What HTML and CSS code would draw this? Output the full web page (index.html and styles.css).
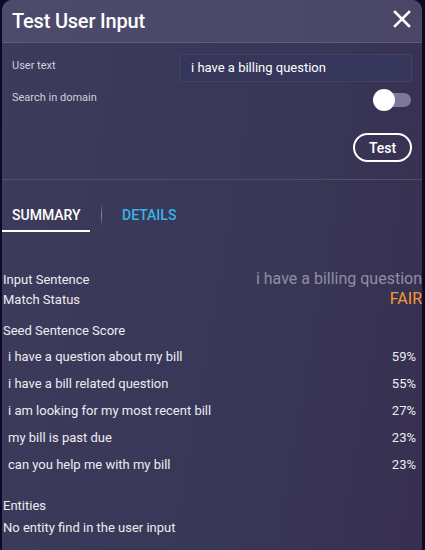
FILE: index.html
```html
<!DOCTYPE html>
<html>
<head>
<meta charset="utf-8">
<link rel="stylesheet" href="styles.css">
</head>
<body>
<div class="panel">
  <div class="header">
    <h1 class="title">Test User Input</h1>
    <svg class="close" width="18" height="18" viewBox="0 0 18 18"><path d="M2 2 L16 16 M16 2 L2 16" stroke="#fff" stroke-width="2.6" stroke-linecap="square"/></svg>
  </div>
  <div class="form">
    <div class="row">
      <span class="label">User text</span>
      <div class="input">i have a billing question</div>
    </div>
    <div class="row toggle-row">
      <span class="label">Search in domain</span>
      <div class="toggle"><span class="track"></span><span class="thumb"></span></div>
    </div>
    <div class="actions"><button class="btn">Test</button></div>
  </div>
  <div class="tabs">
    <div class="tab active">SUMMARY</div>
    <div class="sep"></div>
    <div class="tab link">DETAILS</div>
  </div>
  <div class="summary">
    <div class="kv"><span>Input Sentence</span><span class="val gray">i have a billing question</span></div>
    <div class="kv"><span>Match Status</span><span class="val orange">FAIR</span></div>
    <div class="section">Seed Sentence Score</div>
    <div class="scores">
      <div class="score"><span>i have a question about my bill</span><span>59%</span></div>
      <div class="score"><span>i have a bill related question</span><span>55%</span></div>
      <div class="score"><span>i am looking for my most recent bill</span><span>27%</span></div>
      <div class="score"><span>my bill is past due</span><span>23%</span></div>
      <div class="score"><span>can you help me with my bill</span><span>23%</span></div>
    </div>
    <div class="entities">Entities</div>
    <div class="noent">No entity find in the user input</div>
  </div>
</div>
</body>
</html>
```
FILE: styles.css
```css
html, body { margin: 0; padding: 0; }
body {
  background: #0c0a26;
  font-family: Roboto, "Noto Sans", sans-serif;
  color: #ececf2;
  width: 425px;
  height: 550px;
  overflow: hidden;
}
.panel {
  margin-left: 2px;
  width: 420px;
  height: 550px;
  border-radius: 10px 10px 0 0;
  background: linear-gradient(100deg, #3c3b5b 0%, #393757 60%, #372f50 100%);
  overflow: hidden;
}
.header {
  height: 43px;
  border-bottom: 1px solid #5e5c7a;
  background: linear-gradient(90deg, #4c4b6b, #4a4766);
  display: flex;
  align-items: center;
  justify-content: space-between;
  padding: 0 11px 0 10px;
  box-sizing: border-box;
}
.title {
  margin: 0;
  font-size: 20px;
  font-weight: 500;
  color: #fff;
  letter-spacing: -0.2px;
  padding-bottom: 1px;
}
.close { margin-top: -4px; }
.form {
  padding: 11px 10px 17px 10px;
  border-bottom: 1px solid #514f6c;
}
.row {
  display: flex;
  justify-content: space-between;
  align-items: flex-start;
}
.label {
  font-size: 11px;
  color: #cfcfdc;
  padding-top: 5px;
}
.input {
  width: 232px;
  height: 28px;
  box-sizing: border-box;
  background: #36365a;
  border: 1px solid #41416a;
  color: #fff;
  font-size: 13px;
  padding: 5px 10px;
}
.toggle-row { margin-top: 2px; height: 30px; }
.toggle-row .label { padding-top: 7px; }
.toggle {
  position: relative;
  width: 38px;
  height: 22px;
  margin-top: 5px;
  margin-right: 1px;
}
.track {
  position: absolute;
  left: 6px;
  top: 4px;
  width: 32px;
  height: 14px;
  border-radius: 7px;
  background: #7b7a9a;
}
.thumb {
  position: absolute;
  left: 0;
  top: 0;
  width: 22px;
  height: 22px;
  border-radius: 50%;
  background: #fff;
}
.actions { display: flex; justify-content: flex-end; margin-top: 19px; }
.btn {
  width: 59px;
  height: 29px;
  border: 2px solid #fff;
  border-radius: 15px;
  background: transparent;
  color: #fff;
  font-family: Roboto, sans-serif;
  font-size: 14px;
  font-weight: 500;
  padding: 0;
}
.tabs {
  display: flex;
  align-items: center;
  margin-top: 23px;
  height: 29px;
}
.tab {
  font-size: 14px;
  font-weight: 500;
  height: 29px;
  line-height: 24px;
  box-sizing: border-box;
}
.tab.active {
  color: #fff;
  padding: 0 10px 0 10px;
  width: 88px;
  border-bottom: 2px solid #fff;
}
.sep {
  width: 1px;
  height: 22px;
  background: linear-gradient(#3c3b5b, #8a89a6, #3c3b5b);
  margin: -6px 0 0 11px;
}
.tab.link { color: #39b3ea; margin-left: 20px; }
.summary { padding: 37px 0 0 1px; }
.kv {
  display: flex;
  justify-content: space-between;
  align-items: baseline;
  font-size: 13px;
  height: 20px;
}
.val { font-size: 16px; }
.gray { color: #8f8ea3; }
.orange { color: #f49b2e; }
.section { font-size: 13px; margin-top: 14px; }
.scores { padding: 9px 6px 0 5px; }
.score {
  display: flex;
  justify-content: space-between;
  font-size: 13px;
  height: 27px;
  line-height: 20px;
}
.entities { font-size: 13px; margin-top: 16px; }
.noent { font-size: 13px; margin-top: 7px; }
```
